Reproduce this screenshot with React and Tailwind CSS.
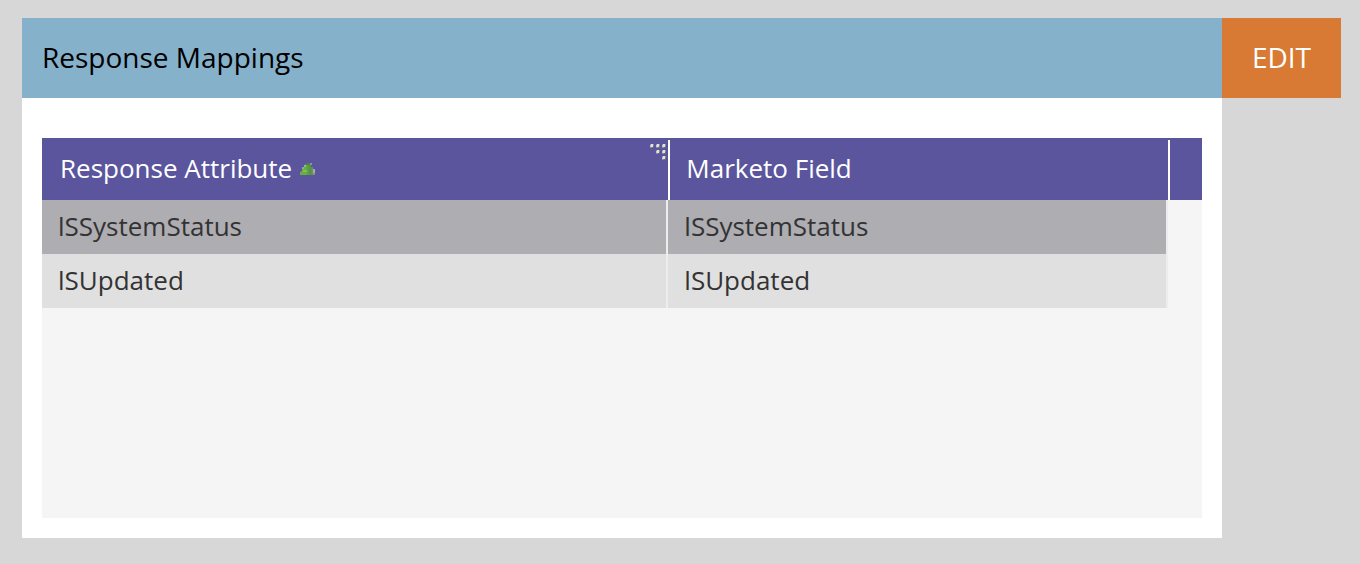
import { useState } from 'react';

const MAPPINGS = [
  { attribute: 'lSSystemStatus', field: 'lSSystemStatus' },
  { attribute: 'lSUpdated', field: 'lSUpdated' }
];

const GRIP_DOTS = [
  [0, 0], [6, 0], [12, 0],
  [6, 6], [12, 6],
  [12, 12]
];

const SortIcon = () => (
  <svg width="16" height="14" viewBox="0 -2 16 14" aria-hidden="true">
    <defs>
      <linearGradient id="sort-fill" x1="0" y1="0" x2="1" y2="0">
        <stop offset="0" stopColor="#6fa354" />
        <stop offset="0.35" stopColor="#66b03f" />
        <stop offset="0.7" stopColor="#568f45" />
        <stop offset="1" stopColor="#7d9a80" />
      </linearGradient>
    </defs>
    <path d="M6 1h4l1 1v2h2v2h1l1 2v4H0V9l2-1V6l2-1V3z" fill="url(#sort-fill)" />
    <path d="M6 0h4v2H6z" fill="#4f7c55" />
    <path d="M10 0h2v2h-2z" fill="#aeb4bd" opacity="0.6" />
    <path d="M4 2h2v2H4zM2 4h2v2H2z" fill="#a5c39a" opacity="0.7" />
    <path d="M3 7h4v2H3z" fill="#7ecb56" opacity="0.8" />
    <path d="M13 6h2v4h-2z" fill="#b4bfbb" opacity="0.7" />
  </svg>
);

const GripIcon = () => (
  <svg width="17" height="17" viewBox="0 0 17 17" aria-hidden="true">
    {GRIP_DOTS.map(([x, y]) => (
      <g key={`${x}-${y}`}>
        <rect x={x} y={y} width="4" height="4" fill="#8b8899" />
        <rect x={x + 2} y={y + 2} width="2" height="2" fill="#6f6c78" />
        <rect x={x} y={y + 1} width="3" height="2" fill="#c4c3c8" />
        <rect x={x + 1} y={y} width="2" height="3" fill="#e2e2e0" />
      </g>
    ))}
  </svg>
);

const App = () => {
  const [selected, setSelected] = useState(0);

  return (
    <div className="min-h-screen bg-[#d7d7d7] pt-[18px] pr-[19px] pb-[26px] pl-[22px] font-['Open_Sans',sans-serif]">
      <div className="flex items-start">
        <section className="flex-1 bg-white">
          {/* Title bar */}
          <header className="flex h-20 items-center bg-[#86b1cb] px-5 pb-0.5">
            <h1 className="text-[28px] leading-10 text-black">Response Mappings</h1>
          </header>

          {/* Mappings grid */}
          <div className="px-5 pt-10 pb-5">
            <div className="min-h-[380px] bg-[#f5f5f5]">
              <div className="bg-[#5a559d] pt-0.5">
                <table className="w-full table-fixed border-separate border-spacing-0 bg-[#f5f5f5] text-left text-[26px] leading-9">
                  <colgroup>
                    <col className="w-[54%]" />
                    <col />
                    <col className="w-[34px]" />
                  </colgroup>
                  <thead>
                    <tr className="h-[60px] bg-[#5a559d] text-white">
                      <th className="relative pb-1 pl-[18px] font-normal">
                        <div className="flex items-center gap-2">
                          Response Attribute
                          <SortIcon />
                        </div>
                        <span className="absolute top-1 right-px">
                          <GripIcon />
                        </span>
                      </th>
                      <th className="border-l-2 border-white pb-1 pl-4 font-normal">Marketo Field</th>
                      <th className="border-l-2 border-white"></th>
                    </tr>
                  </thead>
                  <tbody>
                    {MAPPINGS.map((mapping, index) => (
                      <tr
                        key={mapping.attribute}
                        onClick={() => setSelected(index)}
                        className="h-[54px] text-[#333333]"
                      >
                        <td className={`border-r-2 border-[#ededed] pb-0.5 pl-4 ${selected === index ? 'bg-[#aeadb2]' : 'bg-[#e0e0e0]'}`}>
                          {mapping.attribute}
                        </td>
                        <td className={`border-r-2 border-[#ededed] pb-0.5 pl-4 ${selected === index ? 'bg-[#aeadb2]' : 'bg-[#e0e0e0]'}`}>
                          {mapping.field}
                        </td>
                        <td></td>
                      </tr>
                    ))}
                  </tbody>
                </table>
              </div>
            </div>
          </div>
        </section>

        <button
          type="button"
          className="h-20 bg-[#d87a33] px-[30px] pb-0.5 text-[28px] leading-10 text-white"
        >
          EDIT
        </button>
      </div>
    </div>
  );
};

export default App;
